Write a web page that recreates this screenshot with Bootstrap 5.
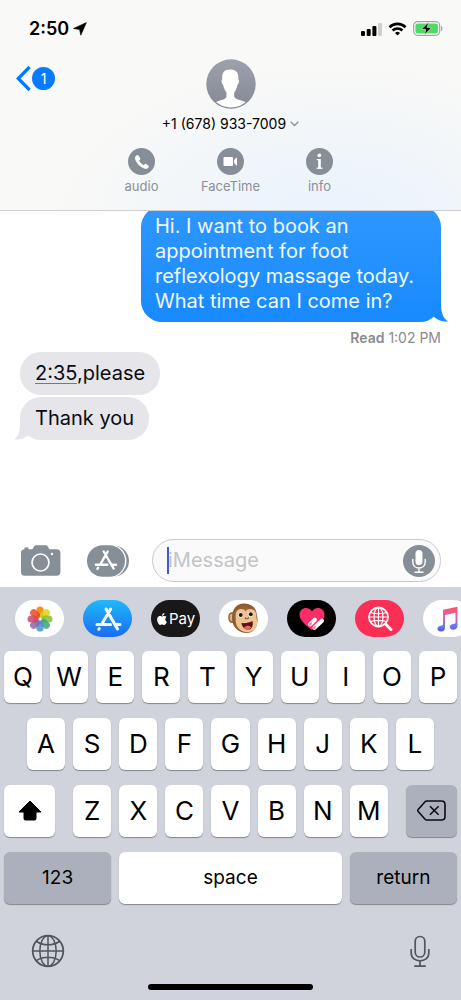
<!DOCTYPE html>
<html lang="en">
<head>
<meta charset="utf-8">
<meta name="viewport" content="width=device-width, initial-scale=1">
<title>Messages</title>
<link href="https://cdn.jsdelivr.net/npm/bootstrap@5.3.0/dist/css/bootstrap.min.css" rel="stylesheet">
<style>
  body { font-family: Inter, "Liberation Sans", sans-serif; color: #0b0b0d; background: #fff; }
  svg { display: block; flex: none; }
  button { font-family: inherit; }
  .plain { border: 0; background: none; padding: 0; color: inherit; }
  .top-bar {
    background: radial-gradient(ellipse 60% 75% at 72% 105%, #e9f2fd 0%, #f9f9f7 100%);
    border-bottom: 1px solid #cfcfd2; z-index: 2; padding-bottom: 16px;
  }
  .status { height: 57px; padding: 0 18px 0 29px; }
  .indicators { gap: 6px; }
  .clock { font-size: 18px; line-height: 24px; font-weight: 600; color: #000; }
  .contact { padding-top: 2px; }
  .back { left: 16px; top: 8px; color: #007aff; }
  .unread { width: 23px; height: 23px; background: #087bff; color: #fff; font-size: 14px; line-height: 23px; }
  .phone { font-size: 14px; line-height: 16px; color: #000; margin-top: 7px; }
  .action { width: 89px; gap: 3px; font-size: 13px; line-height: 16px; color: #8b8f97; }
  .thread { padding: 0 20px; margin-top: -5px; }
  .bubble { font-size: 20px; line-height: 25px; border-radius: 21px; padding: 9px 15px; }
  .sent { width: 300px; color: #f1f8ff; background: linear-gradient(#2f97fd, #178aff); padding: 8px 14px; }
  .got { background: #e5e5ea; }
  .got + .got { margin-top: 2px; }
  .tail { bottom: 0; }
  .tail-out { right: -7px; }
  .tail-in { left: -6px; }
  .receipt { font-size: 14px; line-height: 16px; color: #8a8a8f; margin: 8px 0 6px; }
  .due { text-decoration: underline; text-decoration-thickness: 1px; text-decoration-color: #77777c; text-underline-offset: 3px; }
  .compose { padding: 0 20px 5px; }
  .field { height: 43px; min-width: 0; border: 1px solid #cbc8ca; border-radius: 22px; background: #fafafa; padding: 0 5px 0 15px; margin-left: 22px; }
  .field input { border: 0; background: none; outline: 0; padding: 0; font-size: 20px; line-height: 25px; width: 100%; min-width: 0; }
  .field input::placeholder { color: #c3c3c7; opacity: 1; }
  .caret { width: 2px; height: 27px; background: #3f5bd9; left: 14px; top: 7px; }
  .keyboard { background: #d0d3db; padding-top: 13px; }
  .apps { gap: 19px; padding-left: 15px; overflow: hidden; }
  .app { width: 49px; height: 37px; border-radius: 19px; background: #fff; flex: none; }
  .app-store { background: linear-gradient(#1fb9fb, #1a6cf2); }
  .app-pay { background: #191718; color: #fff; font-size: 15px; line-height: 20px; gap: 1px; }
  .app-touch { background: #000; }
  .app-search { background: #fb2f55; }
  .keys { display: grid; grid-template-columns: repeat(20, 1fr); gap: 15px 8px; padding: 14px 4px 0; }
  .key {
    grid-column: span 2; height: 52px; border: 0; border-radius: 6px; padding: 0 0 1px; background: #fff;
    box-shadow: 0 1px 1px #85878d; color: #000; font-size: 26px; line-height: 32px;
  }
  .key-a { grid-column: 2 / span 2; }
  .key-z { grid-column: 4 / span 2; }
  .key-shift { grid-column: 1 / span 3; margin-right: 10px; }
  .key-del { grid-column: 18 / span 3; margin-left: 10px; }
  .key-word { font-size: 19px; grid-column: span 5; }
  .key-space { grid-column: span 10; }
  .dim { background: #abb0bc; }
  .foot { padding: 30px 30px 0 31px; color: #50555f; }
  .home { width: 165px; height: 6px; border-radius: 3px; background: #000; margin: 16px auto 10px; }
</style>
</head>
<body>
<div class="d-flex flex-column min-vh-100">

  <header class="top-bar position-relative">
    <div class="status d-flex align-items-center justify-content-between">
      <div class="d-flex align-items-center gap-1">
        <span class="clock">2:50</span>
        <svg width="14" height="14" viewBox="0 0 14 14"><path d="M13.4.6 7.8 13.2 6.6 7.6.5 6.5Z" fill="#000" stroke="#000" stroke-width=".6" stroke-linejoin="round"/></svg>
      </div>
      <div class="indicators d-flex align-items-center">
        <svg width="21" height="14" viewBox="0 0 21 14"><rect y="9" width="4" height="5" rx="1"/><rect x="5.700" y="7" width="4" height="7" rx="1"/><rect x="11.400" y="4" width="4" height="10" rx="1"/><rect x="17" y="1" width="4" height="13" rx="1" fill="#cfcfcd"/></svg>
        <svg width="19" height="14" viewBox="0 0 18 14" fill="none" stroke="#000" stroke-width="2.600"><path d="M1 5.200a11.400 11.400 0 0 1 16 0M4.100 8.500a7 7 0 0 1 9.800 0"/><path d="M9 13.600 6.500 11a3.600 3.600 0 0 1 5 0Z" fill="#000" stroke="none"/></svg>
        <svg width="30" height="15" viewBox="0 0 30 15"><rect x=".7" y=".7" width="26" height="13.600" rx="4" fill="#fff" stroke="#a2a4a3" stroke-width="1.200"/><rect x="2.400" y="2.400" width="22.600" height="10.200" rx="2.500" fill="#4cdc66"/><path d="M28.200 5c1.600.6 1.600 4.400 0 5Z" fill="#8f9190"/><path d="M15.500 1.200 8.400 8.300h4.400l-1.300 5.500 7.100-7.200h-4.400Z" stroke="#e3f9e6" stroke-width=".6"/></svg>
      </div>
    </div>

    <div class="contact position-relative d-flex flex-column align-items-center">
      <button class="plain back position-absolute d-flex align-items-center" aria-label="Back, 1 unread">
        <svg width="16" height="27" viewBox="0 0 16 27"><path d="M13.600 2 2.200 13.500 13.600 25" fill="none" stroke="currentColor" stroke-width="3.200"/></svg>
        <span class="unread rounded-circle text-center">1</span>
      </button>
      <svg width="50" height="50" viewBox="0 0 50 50">
        <defs><linearGradient id="av" x2="0" y2="1"><stop stop-color="#9da1ad"/><stop offset="1" stop-color="#858994"/></linearGradient><clipPath id="avc"><circle cx="25" cy="25" r="23.500"/></clipPath></defs>
        <circle cx="25" cy="25" r="24.700" fill="url(#av)"/>
        <path clip-path="url(#avc)" fill="#fff" d="M20.500 33.500c-1.600-2.300-2.900-4.700-3.300-7.700-1.600-.6-2.200-5-.9-5.600-.8-6.300 2-9.800 6.700-9.500 5.500-1.300 10.400 2.300 9.200 9.500 1.400.6.700 5-.8 5.700-.4 2.900-1.500 5.500-3.200 7.600v4.200c1.700 3.700 10.600 3.600 14.300 6.800V51H7v-6.500c3.700-3.200 12.100-3.200 13.500-6.800Z"/>
      </svg>
      <button class="plain phone d-flex align-items-center">+1 (678) 933-7009
        <svg class="ms-1" width="9" height="6" viewBox="0 0 9 6"><path d="m.7.8 3.800 3.700L8.300.8" fill="none" stroke="#8b8f97" stroke-width="1.300"/></svg>
      </button>
      <div class="d-flex pt-3">
        <button class="plain action d-flex flex-column align-items-center">
          <svg width="27" height="27" viewBox="0 0 27 27"><circle cx="13.500" cy="13.500" r="13.500" fill="#868e98"/><path fill="#fff" d="M8.700 7.300c.8-.5 1.400-.3 1.900.5l1.500 2.200c.5.8.3 1.400-.4 1.900-.7.500-.6.900-.2 1.500.9 1.400 2.100 2.500 3.500 3.300.6.300.9.300 1.300-.3.500-.7 1.100-.9 1.900-.4l2 1.400c.8.600.9 1.200.4 1.900-1.200 1.700-2.900 1.900-5 .9-3.400-1.500-6.300-4.300-8-7.800C6.500 10.100 7 8.400 8.700 7.300Z"/></svg>
          <span>audio</span>
        </button>
        <button class="plain action d-flex flex-column align-items-center">
          <svg width="27" height="27" viewBox="0 0 27 27"><circle cx="13.500" cy="13.500" r="13.500" fill="#868e98"/><rect x="6.500" y="9" width="9.500" height="9" rx="1" fill="#fff"/><path d="M20 9.500v8.200c-2-1-3-2.300-3-4.100s1-3.200 3-4.100Z" fill="#fff"/></svg>
          <span>FaceTime</span>
        </button>
        <button class="plain action d-flex flex-column align-items-center">
          <svg width="27" height="27" viewBox="0 0 27 27" fill="#fff"><circle cx="13.500" cy="13.500" r="13.500" fill="#868e98"/><circle cx="13.400" cy="7.300" r="1.900"/><rect x="12.200" y="11" width="2.600" height="9.500"/><rect x="10.800" y="11" width="3" height="1.200"/><rect x="10.500" y="19.600" width="6" height="1.200"/></svg>
          <span>info</span>
        </button>
      </div>
    </div>
  </header>

  <main class="thread flex-grow-1 d-flex flex-column align-items-start">
    <div class="bubble sent position-relative align-self-end">Hi. I want to book an<br>appointment for foot<br>reflexology massage today.<br>What time can I come in?
      <svg class="tail tail-out position-absolute" width="23" height="20" viewBox="0 0 23 20"><path d="M7 0h9c0 9 1 15.500 7 19.400-5 .6-9-.6-14-4.400Z" fill="#178aff"/></svg>
    </div>
    <div class="receipt align-self-end"><span class="fw-semibold">Read</span> 1:02 PM</div>
    <div class="bubble got"><span class="due">2:35</span>,please</div>
    <div class="bubble got position-relative">Thank you
      <svg class="tail tail-in position-absolute" width="23" height="20" viewBox="0 0 23 20"><path d="M16 0H6c0 9 0 15.500-6 19.400 5 .6 10-.6 15-4.400Z" fill="#e5e5ea"/></svg>
    </div>
  </main>

  <form class="compose d-flex align-items-center">
    <button type="button" class="plain" aria-label="Camera">
      <svg width="41" height="32" viewBox="0 0 41 32"><path fill="#868e98" d="M4.500 2.600h4v1.600h4l1.600-2.700C14.700.5 15.500.3 16.500.3h9c1 0 1.700.3 2.300 1.200l1.600 2.700h7.300c2.300 0 3.700 1.200 3.700 3.600v19.200c0 2.400-1.300 3.700-3.700 3.700H4.600c-2.400 0-3.600-1.300-3.600-3.700V7.800c0-2.300 1.200-3.500 3.500-3.600Z"/><circle cx="20.500" cy="17.500" r="8.500" fill="none" stroke="#fff" stroke-width="1.700"/><circle cx="32" cy="9" r="1.200" fill="#fff"/></svg>
    </button>
    <button type="button" class="plain ms-4" aria-label="Apps">
      <svg width="45" height="32" viewBox="0 0 45 32"><rect x="8" y=".5" width="36" height="31" rx="15.500" fill="#868e98"/><rect x="1" y="-.5" width="40.500" height="33" rx="16.500" fill="#fff"/><rect x="2" y=".2" width="38" height="31.600" rx="15.800" fill="#868e98"/><g stroke="#fff" stroke-width="2.400" stroke-linecap="round" fill="none"><path d="m18.700 6.500 9.900 17M22.700 6.500l-7.700 13.300M13 22.800l-.6 1M10.800 19.800h11.500M26.800 19.800h4.200"/></g></svg>
    </button>
    <div class="field position-relative d-flex align-items-center flex-grow-1">
      <input type="text" placeholder="iMessage" aria-label="iMessage">
      <span class="caret position-absolute"></span>
      <button type="button" class="plain" aria-label="Record audio">
        <svg width="32" height="32" viewBox="0 0 32 32"><circle cx="16" cy="16" r="16" fill="#868e98"/><rect x="12.500" y="5" width="7" height="15" rx="3.500" fill="#fff"/><path d="M9.800 14v3c0 8 12.400 8 12.400 0v-3M16 23v4M11.500 27.200h9" fill="none" stroke="#fff" stroke-width="1.400"/></svg>
      </button>
    </div>
  </form>

  <section class="keyboard">
    <div class="apps d-flex">
      <button class="plain app d-flex align-items-center justify-content-center" aria-label="Photos">
        <svg width="28" height="28" viewBox="-14 -14 28 28"><rect x="-3.600" y="-12.500" width="7.200" height="11" rx="3.600" fill="#f5921a"/><g fill-opacity=".85"><rect x="-3.600" y="-12.500" width="7.200" height="11" rx="3.600" fill="#dcd414" transform="rotate(45)"/><rect x="-3.600" y="-12.500" width="7.200" height="11" rx="3.600" fill="#86bf35" transform="rotate(90)"/><rect x="-3.600" y="-12.500" width="7.200" height="11" rx="3.600" fill="#3fa57c" transform="rotate(135)"/><rect x="-3.600" y="-12.500" width="7.200" height="11" rx="3.600" fill="#4a92cc" transform="rotate(180)"/><rect x="-3.600" y="-12.500" width="7.200" height="11" rx="3.600" fill="#8964ab" transform="rotate(225)"/><rect x="-3.600" y="-12.500" width="7.200" height="11" rx="3.600" fill="#cb4673" transform="rotate(270)"/><rect x="-3.600" y="-12.500" width="7.200" height="11" rx="3.600" fill="#e84a2a" transform="rotate(315)"/></g><circle r="1" fill="#fff"/></svg>
      </button>
      <button class="plain app app-store d-flex align-items-center justify-content-center" aria-label="App Store">
        <svg width="28" height="26" viewBox="0 0 28 26"><g stroke="#fff" stroke-width="3" stroke-linecap="round" fill="none"><path d="m12 3 11.500 20M16.700 3 7.500 18.500M5.300 22.500l-.5.800M3 18.500h13.500M21.500 18.500H26"/></g></svg>
      </button>
      <button class="plain app app-pay d-flex align-items-center justify-content-center">
        <svg width="12" height="12" viewBox="0 0 16 16" fill="#fff"><path d="M11.182.008C11.148-.03 9.923.023 8.857 1.180c-1.066 1.156-.902 2.482-.878 2.516s1.520.087 2.475-1.258.762-2.391.728-2.430m3.314 11.733c-.048-.096-2.325-1.234-2.113-3.422s1.675-2.789 1.698-2.854-.597-.79-1.254-1.157a3.700 3.700 0 0 0-1.563-.434c-.108-.003-.483-.095-1.254.116-.508.139-1.653.589-1.968.607-.316.018-1.256-.522-2.267-.665-.647-.125-1.333.131-1.824.328-.49.196-1.422.754-2.074 2.237-.652 1.482-.311 3.830-.067 4.560s.625 1.924 1.273 2.796c.576.984 1.340 1.667 1.659 1.899s1.219.386 1.843.067c.502-.308 1.408-.485 1.766-.472.357.013 1.061.154 1.782.539.571.197 1.111.115 1.652-.105.541-.221 1.324-1.059 2.238-2.758q.52-1.185.473-1.282"/></svg>Pay
      </button>
      <button class="plain app d-flex align-items-center justify-content-center" aria-label="Animoji">
        <svg width="34" height="33" viewBox="0 0 34 33"><defs><radialGradient id="fur"><stop stop-color="#b07a44"/><stop offset="1" stop-color="#8a5a2e"/></radialGradient></defs>
          <ellipse cx="5" cy="15.500" rx="3.800" ry="5.500" fill="#9a6335"/><ellipse cx="5" cy="15.500" rx="2.300" ry="3.800" fill="#e5ae83"/>
          <path d="M17 1.500c7.500 0 12.500 4.500 12.700 11 2.500 8-.7 18-9.700 18.500C12 31 5 25.500 5 16 5 7 9.500 1.500 17 1.500Z" fill="url(#fur)"/>
          <path d="M18.500 9.500c-2-4-9.500-3-9.800 3-.2 3 .2 4.500 0 6.500.2 7 5.800 11.200 11.800 11.200 6.500 0 10-5 9.600-10.700-.2-3-1-4.500-.9-7 0-6-8-7-10.700-3Z" fill="#efc193"/>
          <circle cx="13.500" cy="13" r="2.500" fill="#fff"/><circle cx="23.800" cy="12.300" r="2.500" fill="#fff"/><circle cx="13.700" cy="13" r="2" fill="#25140b"/><circle cx="23.800" cy="12.300" r="2" fill="#25140b"/>
          <path d="m18.300 16 .9.700m2.200-.8-.7.700" stroke="#724323" stroke-width="1.200" stroke-linecap="round"/>
          <path d="M14.500 21c4 .5 7.500-.3 11-2 1 4.500-.6 8.600-4.400 8.600-3.700 0-6-2.600-6.600-6.600Z" fill="#5a1512"/><path d="M17 25.500c2-2 5-2.300 7.200-.6-2 3.500-5.200 3.400-7.200.6Z" fill="#e56663"/></svg>
      </button>
      <button class="plain app app-touch d-flex align-items-center justify-content-center" aria-label="Digital Touch">
        <svg width="26" height="24" viewBox="0 0 26 24"><path d="M13 23C7 18.500.5 13.500.5 7.500c0-7 9-9 12.500-3 3.500-6 12.500-4 12.500 3C25.500 13.500 19 18.500 13 23Z" fill="#fb2d68"/><g stroke-linecap="round"><path d="m11.200 17.200 4.600-4.400M15.500 20.800l7.500-7" stroke="#fff" stroke-width="4.200"/><path d="m10.800 17.500 1.200-1.100M15 21.200l1.200-1.100" stroke="#fb7ba0" stroke-width="2"/></g></svg>
      </button>
      <button class="plain app app-search d-flex align-items-center justify-content-center" aria-label="Images">
        <svg width="26" height="26" viewBox="0 0 26 26" fill="none" stroke="#fff"><circle cx="11.500" cy="11" r="9.500" stroke-width="1.800"/><ellipse cx="11.500" cy="11" rx="4.500" ry="9.500" stroke-width="1.200"/><path d="M11.500 1.500v19M2 11h19M3.500 6.500c5 1.500 11 1.500 16 0M3.500 15.500c5-1.500 11-1.500 16 0" stroke-width="1.200"/><path d="m18.500 18 5.500 5.500" stroke-width="3" stroke-linecap="round"/></svg>
      </button>
      <button class="plain app d-flex align-items-center justify-content-center" aria-label="Music">
        <svg width="22" height="26" viewBox="0 0 22 26"><defs><linearGradient id="mu" x2="0" y2="1"><stop offset=".1" stop-color="#fa5671"/><stop offset=".45" stop-color="#cb68c7"/><stop offset=".8" stop-color="#5a7cf3"/><stop offset="1" stop-color="#6a4be4"/></linearGradient></defs><path fill="url(#mu)" d="M6 3.700 20.500.8V20c0 2-1.500 3.500-3.800 3.700-2.600.2-4-1-4-2.600 0-1.800 1.500-3 3.800-3.200 1.200-.1 2-.5 2-1.500V6.800L8 8.900V22c0 2-1.500 3.300-3.600 3.500-2.500.2-4-1-4-2.700 0-1.800 1.600-2.900 3.600-3.100 1.200-.1 2-.6 2-1.500Z"/></svg>
      </button>
    </div>

    <div class="keys">
      <button class="key">Q</button><button class="key">W</button><button class="key">E</button><button class="key">R</button><button class="key">T</button><button class="key">Y</button><button class="key">U</button><button class="key">I</button><button class="key">O</button><button class="key">P</button>
      <button class="key key-a">A</button><button class="key">S</button><button class="key">D</button><button class="key">F</button><button class="key">G</button><button class="key">H</button><button class="key">J</button><button class="key">K</button><button class="key">L</button>
      <button class="key key-shift d-flex align-items-center justify-content-center" aria-label="Shift"><svg width="24" height="21" viewBox="0 0 24 21"><path d="M12 1 23 12h-5v6.500c0 1-.5 1.500-1.500 1.500h-9C6.500 20 6 19.500 6 18.500V12H1Z" stroke="#000" stroke-linejoin="round"/></svg></button>
      <button class="key key-z">Z</button><button class="key">X</button><button class="key">C</button><button class="key">V</button><button class="key">B</button><button class="key">N</button><button class="key">M</button>
      <button class="key key-del dim d-flex align-items-center justify-content-center" aria-label="Delete"><svg width="29" height="21" viewBox="0 0 29 21" fill="none" stroke="#0b0b14" stroke-width="1.600"><path d="M10 1h14.500c2.300 0 3.500 1.200 3.500 3.500v12c0 2.300-1.200 3.500-3.500 3.500H10c-1 0-1.500-.3-2.200-1L1.200 11.500c-.6-.7-.6-1.300 0-2L7.800 2C8.500 1.300 9 1 10 1Z"/><path d="m13 6.200 8.600 8.600M21.600 6.200 13 14.800"/></svg></button>
      <button class="key key-word dim">123</button>
      <button class="key key-word key-space">space</button>
      <button class="key key-word dim">return</button>
    </div>

    <div class="foot d-flex justify-content-between align-items-center">
      <button class="plain" aria-label="Next keyboard"><svg width="34" height="34" viewBox="0 0 34 34" fill="none" stroke="currentColor" stroke-width="1.500"><circle cx="17" cy="17" r="15.300" stroke-width="1.800"/><ellipse cx="17" cy="17" rx="8.200" ry="15.300"/><path d="M17 1.700v30.600M1.700 17h30.600M5.500 7.500c6.500 4.300 16.500 4.300 23 0M5.500 26.500c6.500-4.300 16.500-4.300 23 0"/></svg></button>
      <button class="plain" aria-label="Dictate"><svg width="22" height="34" viewBox="0 0 22 34" fill="none" stroke="currentColor" stroke-width="1.700"><rect x="6.200" y="2.500" width="9.600" height="20.500" rx="4.800"/><path d="M2.200 15v4c0 10.500 17.600 10.500 17.600 0v-4M11 27v5M5.200 32.200h11.600"/></svg></button>
    </div>
    <div class="home"></div>
  </section>
</div>
<script src="https://cdn.jsdelivr.net/npm/bootstrap@5.3.0/dist/js/bootstrap.bundle.min.js"></script>
</body>
</html>
